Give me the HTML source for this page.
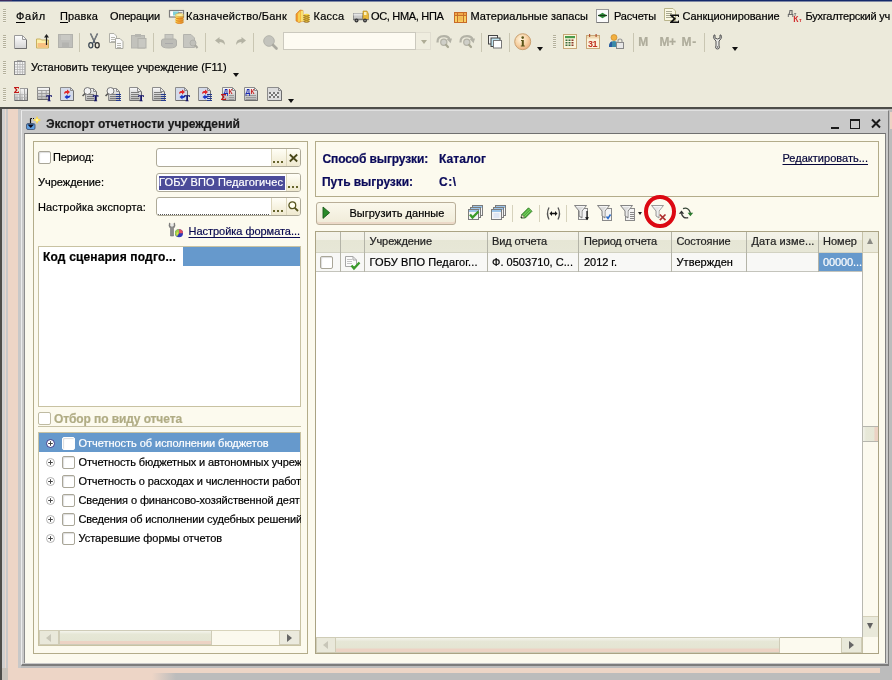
<!DOCTYPE html>
<html>
<head>
<meta charset="utf-8">
<style>
*{box-sizing:border-box;margin:0;padding:0}
html,body{width:892px;height:680px;overflow:hidden}
body{position:relative;background:#ECEADB;font-family:"Liberation Sans",sans-serif;font-size:12px;color:#000}
.a{position:absolute}
.t{position:absolute;white-space:nowrap;line-height:15px;height:15px;-webkit-text-stroke:0.2px currentColor}
.grip{position:absolute;width:3px;background:repeating-linear-gradient(to bottom,#b4b19c 0,#b4b19c 1px,#f2f0e4 1px,#f2f0e4 2px)}
u{text-decoration-thickness:1px;text-underline-offset:1.5px}
.sep{position:absolute;width:1px;background:#c9c6b2}
.inp{position:absolute;height:18.5px;border:1px solid #aeaa98;border-radius:3px;background:#fff;overflow:hidden}
.btn{position:absolute;top:0;bottom:0;width:15px;background:linear-gradient(#fffef6,#efe9cf);border-left:1px solid #dcd6bc}
.cb{position:absolute;width:13px;height:13px;border:1px solid #a9a698;border-radius:2px;background:#fff;box-shadow:inset 1px 1px 1px #ddd}
.vl{position:absolute;width:1px;background:#b4b4a8}
svg{position:absolute;overflow:visible}
</style>
</head>
<body>
<div id="root" style="position:absolute;left:0;top:0;width:892px;height:680px;will-change:transform">
<!-- top dark line -->
<div class="a" style="left:0;top:0;width:892px;height:1px;background:#14296a"></div><div class="a" style="left:0;top:1px;width:892px;height:1px;background:#7f88a4"></div><div class="a" style="left:0;top:0;width:12px;height:1px;background:#3c2a5e"></div>
<!-- toolbar grips -->
<div class="grip" style="left:3px;top:9px;height:14px"></div>
<div class="grip" style="left:3px;top:35px;height:14px"></div>
<div class="grip" style="left:3px;top:61px;height:14px"></div>
<div class="grip" style="left:3px;top:88px;height:14px"></div>
<div class="grip" style="left:553px;top:35px;height:14px"></div>
<!-- toolbar separators row1 -->
<div class="sep" style="left:79px;top:33px;height:19px"></div>
<div class="sep" style="left:153px;top:33px;height:19px"></div>
<div class="sep" style="left:205px;top:33px;height:19px"></div>
<div class="sep" style="left:253px;top:33px;height:19px"></div>
<div class="sep" style="left:481px;top:33px;height:19px"></div>
<div class="sep" style="left:509px;top:33px;height:19px"></div>
<div class="sep" style="left:633px;top:33px;height:19px"></div>
<div class="sep" style="left:704px;top:33px;height:19px"></div>
<!-- search combo -->
<div class="a" style="left:283px;top:32px;width:133px;height:18px;border:1px solid #cbc9be;background:#fdfbf2"></div>
<div class="a" style="left:416px;top:32px;width:15px;height:18px;border:1px solid #e0ddd0;border-left:0;background:#efeddf"></div>
<div class="a" style="left:420.5px;top:40px;width:0;height:0;border-left:3.7px solid transparent;border-right:3.7px solid transparent;border-top:4.2px solid #aeac96"></div>

<!-- MDI AREA -->
<div class="a" style="left:0;top:107px;width:892px;height:573px;background:#bcbcbc"></div>
<div class="a" style="left:0;top:107px;width:892px;height:2px;background:#4d4d49"></div>
<div class="a" style="left:0;top:107px;width:2px;height:573px;background:#4d4d49"></div>
<div class="a" style="left:2px;top:109px;width:3px;height:571px;background:#d0d0d0"></div>
<div class="a" style="left:5px;top:109px;width:1px;height:560px;background:#ead8cc"></div>
<div class="a" style="left:6px;top:109px;width:2px;height:560px;background:#c8c8c8"></div>
<div class="a" style="left:8px;top:109px;width:10px;height:571px;background:#edd5c6"></div>
<div class="a" style="left:18px;top:109px;width:3px;height:559px;background:#c8c8c8"></div>
<div class="a" style="left:16px;top:673px;width:160px;height:7px;background:linear-gradient(to right,#edd5c6 0,#edd5c6 85%,#bcbcbc 100%)"></div>
<div class="a" style="left:2px;top:668px;width:6px;height:12px;background:#c9c4bc"></div>
<!-- bottom peach strip -->
<div class="a" style="left:8px;top:668px;width:872px;height:5px;background:#edd5c6"></div>
<div class="a" style="left:890px;top:112px;width:2px;height:17px;background:#edd3c4"></div>

<!-- WINDOW -->
<div class="a" style="left:21px;top:110px;width:868px;height:556px;background:#c9c9c9;border-left:1px solid #ececec;border-top:1px solid #e0e0e0;border-right:1px solid #7c7c7c;border-bottom:2px solid #7c7c7c"></div>
<!-- body -->
<div class="a" style="left:24px;top:133px;width:862px;height:530px;background:#fcfaee;border-left:1px solid #8d8d8d;border-top:1px solid #707070;border-right:1px solid #808080"></div>
<!-- window controls -->
<div class="a" style="left:831px;top:127px;width:8px;height:2px;background:#1a1a1a"></div>
<div class="a" style="left:850px;top:119px;width:10px;height:10px;border:1px solid #1a1a1a;border-top-width:2px"></div>
<svg style="left:871px;top:119px" width="10" height="9" viewBox="0 0 10 9"><path d="M1 0.5 L9 8.5 M9 0.5 L1 8.5" stroke="#1a1a1a" stroke-width="2" fill="none"/></svg>

<!-- LEFT PANEL -->
<div class="a" style="left:33px;top:141px;width:275px;height:513px;border:1px solid #b3ac8a"></div>
<div class="cb" style="left:38px;top:151px"></div>
<div class="inp" style="left:156px;top:148px;width:145px"><div class="btn" style="left:114px"></div><div class="btn" style="left:129px"></div></div>
<div class="inp" style="left:156px;top:173.3px;width:145px"><div class="a" style="left:2px;top:2px;width:126px;height:14px;background:#4b4b99"></div><div class="btn" style="left:129px"></div></div>
<div class="inp" style="left:156px;top:197.3px;width:145px"><div class="a" style="left:1px;right:31px;bottom:0;height:0;border-bottom:1px dotted #555"></div><div class="btn" style="left:114px"></div><div class="btn" style="left:129px"></div></div>
<!-- upper table -->
<div class="a" style="left:38px;top:246px;width:263px;height:161px;background:#fff;border:1px solid #c8c2a2"></div>
<div class="a" style="left:183px;top:247px;width:117px;height:19px;background:#6699cc"></div>
<!-- filter checkbox -->
<div class="cb" style="left:38px;top:412px;border-color:#bfbba2;box-shadow:none"></div>
<div class="a" style="left:38px;top:426px;width:263px;height:1px;background:#c6c1a4"></div>
<!-- tree -->
<div class="a" style="left:38px;top:432px;width:263px;height:214px;background:#fff;border:1px solid #c8c2a2"></div>
<div class="a" style="left:39px;top:433px;width:261px;height:19px;background:#6699cc"></div>
<div class="cb" style="left:62px;top:437px;border-color:#fff"></div>
<div class="cb" style="left:62px;top:456px"></div>
<div class="cb" style="left:62px;top:475px"></div>
<div class="cb" style="left:62px;top:494px"></div>
<div class="cb" style="left:62px;top:513px"></div>
<div class="cb" style="left:62px;top:532px"></div>
<!-- tree hscroll -->
<div class="a" style="left:39px;top:630px;width:261px;height:15px;background:#fbf9ee;border-top:1px solid #d8d4bc"></div>
<div class="a" style="left:39px;top:630px;width:20px;height:15px;background:#e9e8da;border:1px solid #d0ccb6"></div>
<div class="a" style="left:59px;top:630px;width:153px;height:15px;background:linear-gradient(#f4f4ec 0,#e6e7d6 25%,#e4e5d3 75%,#ecd3c4 80%);border:1px solid #cfccb8"></div>
<div class="a" style="left:279px;top:630px;width:21px;height:15px;background:#ebeade;border:1px solid #d0ccb6"></div>

<!-- RIGHT PANEL -->
<div class="a" style="left:315px;top:141px;width:564px;height:56px;border:1px solid #b3ac8a"></div>
<!-- button -->
<div class="a" style="left:315.5px;top:201.5px;width:140px;height:23px;border:1px solid #b9ae98;border-radius:3px;background:linear-gradient(#faf8ec,#f0ebd8);box-shadow:inset 0 -2px 0 #ecd9c8"></div>
<!-- toolbar seps -->
<div class="sep" style="left:512px;top:205px;height:17px;background:#d6d2bc"></div>
<div class="sep" style="left:539px;top:205px;height:17px;background:#d6d2bc"></div>
<div class="sep" style="left:566px;top:205px;height:17px;background:#d6d2bc"></div>
<!-- table -->
<div class="a" style="left:315px;top:231px;width:564px;height:423px;background:#fff;border:1px solid #aaa384"></div>
<div class="a" style="left:316px;top:232px;width:546px;height:21px;background:linear-gradient(#f4f3ea 0,#f1f0e6 38%,#e6e6d5 42%,#e7e7d7 100%);border-bottom:1px solid #d2d2c2"></div>
<div class="a" style="left:316px;top:253px;width:546px;height:19px;background:#f8f8f6;border-bottom:1px solid #c4c4bc"></div>
<div class="a" style="left:819px;top:253px;width:43px;height:18px;background:#6699cc"></div>
<div class="vl" style="left:340px;top:232px;height:40px"></div>
<div class="vl" style="left:364px;top:232px;height:40px"></div>
<div class="vl" style="left:487px;top:232px;height:40px"></div>
<div class="vl" style="left:578px;top:232px;height:40px"></div>
<div class="vl" style="left:671px;top:232px;height:40px"></div>
<div class="vl" style="left:746px;top:232px;height:40px"></div>
<div class="vl" style="left:818px;top:232px;height:40px"></div>
<div class="cb" style="left:320px;top:256px"></div>
<!-- v scroll -->
<div class="a" style="left:862px;top:232px;width:16px;height:421px;background:#fcfaef;border-left:1px solid #b8b8b0"></div>
<div class="a" style="left:862px;top:232px;width:16px;height:21px;background:#ebeadb;border-left:1px solid #c6c2a8;border-bottom:1px solid #d5d1ba"></div>
<div class="a" style="left:867px;top:238px;width:0;height:0;border:3.5px solid transparent;border-bottom:6.5px solid #8a8a84;border-top:0"></div>
<div class="a" style="left:863px;top:426px;width:15px;height:16px;background:linear-gradient(to right,#f2f2ea 0,#e7e8d8 20%,#e6e7d6 72%,#ecd3c4 80%);border-top:1px solid #b6b6ae;border-bottom:1px solid #b6b6ae"></div>
<div class="a" style="left:863px;top:616px;width:15px;height:21px;background:#e9e9da;border-top:1px solid #d5d1ba"></div>
<div class="a" style="left:867px;top:623px;width:0;height:0;border:3.5px solid transparent;border-top:6.5px solid #606060;border-bottom:0"></div>
<!-- h scroll -->
<div class="a" style="left:316px;top:637px;width:546px;height:16px;background:#fcfaef;border-top:1px solid #bdb9a0"></div>
<div class="a" style="left:316px;top:637px;width:20px;height:16px;background:#e9e8da;border:1px solid #cfccb6"></div>
<div class="a" style="left:336px;top:637px;width:444px;height:16px;background:linear-gradient(#f4f4ec 0,#e6e7d6 25%,#e4e5d3 72%,#ecd3c4 78%);border:1px solid #cfccb8;border-left:0"></div>
<div class="a" style="left:841px;top:637px;width:21px;height:16px;background:#e9e9da;border:1px solid #cfccb6"></div>
<div class="a" style="left:862px;top:637px;width:1px;height:16px;background:#c6c2a8"></div>

<svg width="0" height="0" style="left:0;top:0"><defs>
<linearGradient id="gdoc" x1="0" y1="0" x2="0" y2="1"><stop offset="0" stop-color="#ffffff"/><stop offset="1" stop-color="#d4d4d4"/></linearGradient>
<linearGradient id="ggray" x1="0" y1="0" x2="0" y2="1"><stop offset="0" stop-color="#d0cfc4"/><stop offset="1" stop-color="#b9b8ae"/></linearGradient>
<linearGradient id="gfold" x1="0" y1="0" x2="0" y2="1"><stop offset="0" stop-color="#fff3b0"/><stop offset="1" stop-color="#f7c777"/></linearGradient>
<radialGradient id="ginfo" cx="0.4" cy="0.35" r="0.7"><stop offset="0" stop-color="#fff6e0"/><stop offset="0.6" stop-color="#f6cfa0"/><stop offset="1" stop-color="#e8a878"/></radialGradient>
<linearGradient id="gcoin" x1="0" y1="0" x2="1" y2="0"><stop offset="0" stop-color="#f5e25a"/><stop offset="0.6" stop-color="#f0a030"/><stop offset="1" stop-color="#c8a040"/></linearGradient>
<linearGradient id="gdoc2" x1="0" y1="0" x2="0" y2="1"><stop offset="0" stop-color="#fafafa"/><stop offset="1" stop-color="#b4b4b4"/></linearGradient>
</defs></svg>
<svg style="left:169px;top:9px" width="16" height="16" viewBox="0 0 16 16" ><rect x="0.5" y="1.5" width="14" height="6.5" fill="#fff" stroke="#7d7d7d" stroke-width="1.2"/><rect x="4" y="2.5" width="6" height="4" fill="#7fd0d8"/><rect x="9" y="3" width="4.5" height="1" fill="#999"/><path d="M6.5 6 a4 1.6 0 0 1 8 0 v7 a4 1.6 0 0 1 -8 0z" fill="url(#gcoin)"/><ellipse cx="10.5" cy="6" rx="4" ry="1.6" fill="#fbf0a0" stroke="#c8a040" stroke-width="0.5"/><path d="M6.5 8.3 a4 1.6 0 0 0 8 0 M6.5 10.6 a4 1.6 0 0 0 8 0 M6.5 12.8 a4 1.6 0 0 0 8 0" fill="none" stroke="#e07818" stroke-width="0.9"/></svg>
<svg style="left:295px;top:9px" width="16" height="15" viewBox="0 0 16 15" ><path d="M1 5 L5 1 L8 1.5 L8 12 L4 13.5 L1 12Z" fill="#f3a032" stroke="#d07818" stroke-width="0.6"/><path d="M3 4.5 L5.5 2 V12.5 L3 13Z" fill="#f8d050"/><path d="M6 2 L8 1.5 V12 L6 12.8Z" fill="#f8e070"/><path d="M8.5 6 a3 1.2 0 0 1 6 0 v6 a3 1.2 0 0 1 -6 0z" fill="#f6d648"/><path d="M8.5 6 a3 1.2 0 0 0 6 0 M8.5 8 a3 1.2 0 0 0 6 0 M8.5 10 a3 1.2 0 0 0 6 0 M8.5 12 a3 1.2 0 0 0 6 0" fill="none" stroke="#7a4a10" stroke-width="0.9"/></svg>
<svg style="left:353px;top:10px" width="16" height="13" viewBox="0 0 16 13" ><rect x="0.5" y="3.5" width="9" height="5.5" fill="#c9c9c9" stroke="#8e8e8e"/><rect x="0.5" y="3.5" width="9" height="2" fill="#e4e4e4"/><path d="M10 1 H14 L15.5 4 V9.5 H10Z" fill="#e9b83a" stroke="#b08820" stroke-width="0.6"/><rect x="11" y="2" width="2.5" height="3" fill="#f8f0c0"/><rect x="0" y="9" width="15.5" height="1.2" fill="#777"/><circle cx="3.5" cy="10.5" r="2" fill="#333"/><circle cx="12" cy="10.5" r="2" fill="#333"/><circle cx="3.5" cy="10.5" r="0.8" fill="#999"/><circle cx="12" cy="10.5" r="0.8" fill="#999"/></svg>
<svg style="left:454px;top:12px" width="13" height="11" viewBox="0 0 13 11" ><rect x="0.5" y="0.5" width="12" height="10" fill="#f8cf60" stroke="#c86a28"/><rect x="1" y="1" width="11" height="2" fill="#f0a848"/><path d="M3.5 0.5 V10.5 M9.5 0.5 V10.5 M0.5 3.5 H12.5" stroke="#c8702a" stroke-width="1" fill="none"/><rect x="4.5" y="4.5" width="4" height="4" fill="#f2b850"/></svg>
<svg style="left:596px;top:9px" width="13" height="14" viewBox="0 0 13 14" ><rect x="0.5" y="0.5" width="12" height="13" fill="#fbfbfb" stroke="#9a9a9a"/><path d="M1 13.5 H12.5 V1" stroke="#777" fill="none"/><path d="M2 6.5 L6.5 3.8 L11 6.5 L6.5 9.2Z" fill="#2e8b3a"/><path d="M2 6.5 H11" stroke="#1a3a1a" stroke-width="1.2"/></svg>
<svg style="left:664px;top:8px" width="16" height="15" viewBox="0 0 16 15" ><path d="M0.5 0.5 H9 L11.5 3 V12.5 H0.5Z" fill="#fbf8e4" stroke="#b9b48a"/><rect x="2" y="3" width="6" height="1" fill="#a8a890"/><rect x="2" y="5" width="6" height="1" fill="#a8a890"/><rect x="2" y="7" width="6" height="1" fill="#a8a890"/><rect x="2" y="9" width="6" height="1" fill="#a8a890"/><path d="M6 6.5 H15 V9 H14 V8 H9 L12 10.8 L9 13.5 H14 V12.5 H15 V15 H6 V14 L9.5 10.8 L6 7.5Z" fill="#111"/></svg>
<svg style="left:787px;top:8px" width="16" height="15" viewBox="0 0 16 15" ><text x="0.8" y="6.6" font-family="Liberation Sans" font-weight="bold" font-size="8" fill="#6a6a6a">Д</text><text x="6.8" y="7.6" font-family="Liberation Sans" font-weight="bold" font-size="5.5" fill="#6a6a6a">т</text><text x="6.2" y="13.6" font-family="Liberation Sans" font-weight="bold" font-size="8.5" fill="#d23030">К</text><text x="12" y="14.4" font-family="Liberation Sans" font-weight="bold" font-size="5.5" fill="#d23030">т</text></svg>
<svg style="left:14px;top:35px" width="13" height="14" viewBox="0 0 13 14" ><path d="M0.5 0.5 H8.5 L12.5 4.5 V13.5 H0.5 Z" fill="url(#gdoc)" stroke="#9a9a9a"/><path d="M8.5 0.5 V4.5 H12.5" fill="none" stroke="#9a9a9a"/><path d="M1 13.5 H12.5 V5" fill="none" stroke="#6e6e6e"/></svg>
<svg style="left:36px;top:33px" width="15" height="16" viewBox="0 0 15 16" ><path d="M0.5 6 H4.5 L5.5 7 H12.5 V15 H0.5Z" fill="#fdf0a8" stroke="#c8b060"/><rect x="1.5" y="10" width="10.5" height="4.5" fill="#f8c080"/><path d="M10.5 12 V2.5" stroke="#222" stroke-width="1.2"/><path d="M8 4.5 L10.5 1 L13 4.5Z" fill="#222"/></svg>
<svg style="left:58px;top:34px" width="15" height="14" viewBox="0 0 15 14" ><rect x="0.5" y="0.5" width="14" height="13" fill="#bfbfbb" stroke="#b2b2ac"/><rect x="3" y="1" width="9" height="5" fill="#c9c9c4"/><rect x="4" y="8.5" width="7" height="5" fill="#b4b4b0"/></svg>
<svg style="left:88px;top:33px" width="12" height="16" viewBox="0 0 12 16" ><path d="M2.5 0.5 L7 10 M9.5 0.5 L5 10" stroke="#56606c" stroke-width="1.5" fill="none"/><path d="M2.5 0.5 L5.5 7 M9.5 0.5 L6.5 7" stroke="#888" stroke-width="0.8" fill="none"/><ellipse cx="2.8" cy="12.3" rx="2" ry="2.6" fill="none" stroke="#3a4652" stroke-width="1.3"/><ellipse cx="9.2" cy="12.3" rx="2" ry="2.6" fill="none" stroke="#333" stroke-width="1.3"/></svg>
<svg style="left:109px;top:33px" width="15" height="16" viewBox="0 0 15 16" ><path d="M0.5 0.5 H5 L7.5 3 V9.5 H0.5Z" fill="#fafafa" stroke="#b0b0a8"/><rect x="2" y="4" width="4" height="1" fill="#b8b8b0"/><rect x="2" y="6" width="4" height="1" fill="#b8b8b0"/><rect x="2" y="8" width="4" height="1" fill="#b8b8b0"/><path d="M6.5 5.5 H11 L14 8.5 V15.5 H6.5Z" fill="#fafafa" stroke="#a8a8a0"/><rect x="8" y="10" width="4" height="1" fill="#b8b8b0"/><rect x="8" y="12" width="4" height="1" fill="#b8b8b0"/><rect x="8" y="14" width="4" height="1" fill="#b8b8b0"/></svg>
<svg style="left:131px;top:34px" width="16" height="15" viewBox="0 0 16 15" ><rect x="0.5" y="1.5" width="13" height="12.5" fill="#c2c2bc" stroke="#b4b4ae"/><rect x="4" y="0" width="6" height="3" fill="#b6b6b0"/><rect x="7" y="4.5" width="8" height="9.5" fill="#c8c8c2" stroke="#b0b0aa"/></svg>
<svg style="left:161px;top:34px" width="16" height="15" viewBox="0 0 16 15" ><rect x="4" y="0.5" width="8" height="5" fill="#c8c8c2" stroke="#b6b6b0"/><path d="M0.5 7 Q0.5 5 2.5 5 H13.5 Q15.5 5 15.5 7 V11 Q15.5 14 8 14 Q0.5 14 0.5 11Z" fill="#bdbdb7" stroke="#b0b0aa"/><rect x="4" y="9" width="8" height="1" fill="#aaa"/></svg>
<svg style="left:183px;top:33px" width="16" height="16" viewBox="0 0 16 16" ><path d="M0.5 1.5 H8 L11.5 5 V14.5 H0.5Z" fill="#c6c6c0" stroke="#b4b4ae"/><circle cx="10" cy="10" r="3" fill="#c0c0ba" stroke="#b0b0aa"/><path d="M12 12 L14.5 15" stroke="#aaa9a0" stroke-width="2"/></svg>
<svg style="left:215px;top:37px" width="11" height="9" viewBox="0 0 11 9" ><path d="M0 3.5 L4.5 0 V2 Q10 2 10 8 Q8 5 4.5 5 V7Z" fill="#b4b3a4"/></svg>
<svg style="left:235px;top:37px" width="11" height="9" viewBox="0 0 11 9" ><path d="M11 3.5 L6.5 0 V2 Q1 2 1 8 Q3 5 6.5 5 V7Z" fill="#b4b3a4"/></svg>
<svg style="left:263px;top:35px" width="16" height="15" viewBox="0 0 16 15" ><circle cx="6" cy="6" r="5.3" fill="#c3c3bc" stroke="#b2b2aa"/><path d="M10 10 L13.5 13.5" stroke="#aaa9a0" stroke-width="2.6" stroke-linecap="round"/></svg>
<svg style="left:435.5px;top:34px" width="16" height="14" viewBox="0 0 16 14" ><path d="M1.5 8.5 Q1 2.2 8 2.2 Q12.5 2.2 13.6 5.5" stroke="#b3b2a6" stroke-width="2.3" fill="none"/><path d="M10.6 5 L16 4.4 L14.6 9.2Z" fill="#b3b2a6"/><circle cx="7.8" cy="8.3" r="3.1" fill="#cfcfc8" stroke="#b3b2a6" stroke-width="1.2"/><path d="M10 10.8 L12 13" stroke="#a9a894" stroke-width="2.2" stroke-linecap="round"/></svg>
<svg style="left:458.5px;top:34px" width="16" height="14" viewBox="0 0 16 14" ><path d="M1.5 8.5 Q1 2.2 8 2.2 Q12.5 2.2 13.6 5.5" stroke="#b3b2a6" stroke-width="2.3" fill="none"/><path d="M10.6 5 L16 4.4 L14.6 9.2Z" fill="#b3b2a6"/><circle cx="7.8" cy="8.3" r="3.1" fill="#cfcfc8" stroke="#b3b2a6" stroke-width="1.2"/><path d="M10 10.8 L12 13" stroke="#a9a894" stroke-width="2.2" stroke-linecap="round"/></svg>
<svg style="left:488px;top:35px" width="15" height="14" viewBox="0 0 15 14" ><rect x="0.5" y="0.5" width="9" height="8.5" fill="#f4f4f4" stroke="#444"/><rect x="3" y="3" width="9" height="8.5" fill="#bfe4f0" stroke="#444"/><rect x="5.5" y="5.5" width="8" height="7.5" fill="#fff" stroke="#777"/></svg>
<svg style="left:514px;top:33px" width="18" height="18" viewBox="0 0 18 18" ><circle cx="8.7" cy="8.7" r="8" fill="url(#ginfo)" stroke="#c8a070" stroke-width="1"/><circle cx="8.7" cy="4.6" r="1.3" fill="#5a5418"/><path d="M7 7 H9.8 V12.5 H10.8 V13.5 H6.8 V12.5 H7.8 V8 H7Z" fill="#5a5418"/></svg>
<div class="a" style="left:537px;top:47px;width:0;height:0;border-left:3.5px solid transparent;border-right:3.5px solid transparent;border-top:4px solid #111"></div>
<svg style="left:563px;top:34px" width="14" height="15" viewBox="0 0 14 15" ><rect x="0.5" y="0.5" width="13" height="14" fill="#fbf6dc" stroke="#c8a878"/><rect x="2" y="2" width="10" height="2.2" fill="#4a9a4a"/><rect x="2.5" y="5.5" width="2" height="1.5" fill="#3a6a3a"/><rect x="2.5" y="8.0" width="2" height="1.5" fill="#3a6a3a"/><rect x="2.5" y="10.5" width="2" height="1.5" fill="#3a6a3a"/><rect x="5.5" y="5.5" width="2" height="1.5" fill="#3a6a3a"/><rect x="5.5" y="8.0" width="2" height="1.5" fill="#3a6a3a"/><rect x="5.5" y="10.5" width="2" height="1.5" fill="#3a6a3a"/><rect x="8.5" y="5.5" width="2" height="1.5" fill="#8a3a2a"/><rect x="8.5" y="8.0" width="2" height="1.5" fill="#8a3a2a"/><rect x="8.5" y="10.5" width="2" height="1.5" fill="#8a3a2a"/></svg>
<svg style="left:586px;top:34px" width="14" height="15" viewBox="0 0 14 15" ><rect x="0.5" y="1.5" width="13" height="13" fill="#fbf3dc" stroke="#c8a878"/><rect x="1" y="2" width="12" height="2.5" fill="#f0d8b0"/><rect x="3" y="0" width="1.2" height="3" fill="#b05030"/><rect x="9.5" y="0" width="1.2" height="3" fill="#b05030"/><text x="2" y="13" font-family="Liberation Sans" font-weight="bold" font-size="9" fill="#c03020" letter-spacing="-0.5">31</text></svg>
<svg style="left:609px;top:34px" width="15" height="15" viewBox="0 0 15 15" ><circle cx="5" cy="3.5" r="3" fill="#f2b040" stroke="#c08020" stroke-width="0.6"/><path d="M0 13 Q0 7 5 7 Q10 7 10 13Z" fill="#3a8aa8"/><path d="M0 13 Q0 8 3 7.5 L3 13Z" fill="#2a5aa0"/><rect x="7.5" y="8.5" width="7" height="6" fill="#e8e8e8" stroke="#888"/><path d="M9 8.5 V7 Q9 5 11 5 Q13 5 13 7 V8.5" fill="none" stroke="#999" stroke-width="1.2"/></svg>
<svg style="left:712px;top:34px" width="12" height="16" viewBox="0 0 12 16" ><path d="M2 1 Q0.5 4 3 6 L4 7 V12 Q3 13 4 14.5 Q5.5 15.5 7 14.5 Q8 13 7 12 V7 L8 6 Q10.5 4 9 1 L8 1 V4 L5.5 5 L3 4 V1Z" fill="#e8e8e4" stroke="#555" stroke-width="1"/><circle cx="5.5" cy="13" r="0.8" fill="#555"/></svg>
<div class="a" style="left:732px;top:47px;width:0;height:0;border-left:3.5px solid transparent;border-right:3.5px solid transparent;border-top:4px solid #111"></div>
<svg style="left:14px;top:60px" width="12" height="15" viewBox="0 0 12 15" ><rect x="3" y="0" width="5" height="2" fill="#aaa"/><rect x="0.5" y="1.5" width="10.5" height="13" fill="#f2f2f2" stroke="#8a8a8a"/><path d="M3.5 2 V14 M6 2 V14 M8.5 2 V14 M1 4.5 H11 M1 7 H11 M1 9.5 H11 M1 12 H11" stroke="#b4b4b4" stroke-width="0.8" fill="none"/></svg>
<div class="a" style="left:233px;top:73px;width:0;height:0;border-left:3.5px solid transparent;border-right:3.5px solid transparent;border-top:4px solid #111"></div>
<svg style="left:14px;top:87px" width="15" height="14" viewBox="0 0 15 14" ><rect x="0.5" y="1.5" width="13" height="12" fill="url(#gdoc2)" stroke="#9a9a9a"/><path d="M5 2 V13 M9.5 2 V13" stroke="#f8f8f8" stroke-width="1"/><path d="M5.9 2 V13 M10.4 2 V13" stroke="#8a8a8a" stroke-width="0.8"/><path d="M1 7.5 H13 M1 10.5 H13" stroke="#b0b0b0" stroke-width="0.7"/><path d="M1 13.5 H13.5 V2" fill="none" stroke="#6a6a6a"/><rect x="0" y="0" width="6" height="6.6" fill="#ecead9"/><path d="M0 0 H5 V1.7 H4.3 V1 H1.9 L3.6 3 L1.9 5 H4.3 V4.3 H5 V6 H0 V5.2 L2 3 L0 0.8Z" fill="#c01818"/></svg>
<svg style="left:37px;top:87px" width="16" height="15" viewBox="0 0 16 15" ><rect x="0.5" y="0.5" width="12" height="12" fill="url(#gdoc2)" stroke="#8c8c8c"/><path d="M0.5 3.5 H12.5 M0.5 6.5 H12.5 M0.5 9.5 H12.5 M4.8 3.5 V12.5 M9.2 3.5 V12.5" stroke="#9a9a9a" stroke-width="0.9" fill="none"/><path d="M1 12.5 H12.5 V1" fill="none" stroke="#666"/><rect x="8" y="6" width="8" height="9" fill="#ecead8" opacity="0.0"/><path d="M9.3 8.2 h5.6 v1.8 h-0.8 v-0.8 h-1.2 v4.2 h0.8 v0.9 h-3.2 v-0.9 h0.8 v-4.2 h-1.2 v0.8 h-0.8 z" fill="#10106a"/></svg>
<svg style="left:60px;top:87px" width="14" height="14" viewBox="0 0 14 14" ><path d="M0.5 0.5 H10.5 L13.5 3.5 V13.5 H0.5 Z" fill="#d4dbea" stroke="#8c8c8c"/><path d="M10.5 0.5 V3.5 H13.5" fill="none" stroke="#8c8c8c"/><path d="M1 13.5 H13.5 V4" fill="none" stroke="#6e6e6e"/><path d="M4 7 C4 4.5 5.5 4 7 4 V2.5 L10 5 L7 7.5 V6 C5.8 6 5 6.2 4 7Z" fill="#e02828"/><path d="M10.5 8 C10.5 10.5 9 11 7.5 11 V12.5 L4.5 10 L7.5 7.5 V9 C8.7 9 9.5 8.8 10.5 8Z" fill="#1a38c8"/></svg>
<svg style="left:82px;top:87px" width="17" height="15" viewBox="0 0 17 15" ><g transform="translate(3,1)"><path d="M0.5 0.5 H8.5 L11.5 3.5 V12.5 H0.5 Z" fill="url(#gdoc2)" stroke="#8c8c8c"/><path d="M8.5 0.5 V3.5 H11.5" fill="none" stroke="#8c8c8c"/><path d="M1 12.5 H11.5 V4" fill="none" stroke="#6e6e6e"/><rect x="2" y="6" width="7" height="1" fill="#7c7c7c"/><rect x="2" y="8" width="7" height="1" fill="#7c7c7c"/><rect x="2" y="10" width="7" height="1" fill="#7c7c7c"/></g><circle cx="5.5" cy="4" r="3.5" fill="#f4f4f4" stroke="#777"/><path d="M3.0500000000000003 6.449999999999999 L0.5500000000000003 8.95" stroke="#555" stroke-width="1.6"/><path d="M10.8 8.2 h5.6 v1.8 h-0.8 v-0.8 h-1.2 v4.2 h0.8 v0.9 h-3.2 v-0.9 h0.8 v-4.2 h-1.2 v0.8 h-0.8 z" fill="#10106a"/></svg>
<svg style="left:105px;top:87px" width="17" height="15" viewBox="0 0 17 15" ><g transform="translate(3,1)"><path d="M0.5 0.5 H8.5 L11.5 3.5 V12.5 H0.5 Z" fill="url(#gdoc2)" stroke="#8c8c8c"/><path d="M8.5 0.5 V3.5 H11.5" fill="none" stroke="#8c8c8c"/><path d="M1 12.5 H11.5 V4" fill="none" stroke="#6e6e6e"/><rect x="2" y="6" width="7" height="1" fill="#7c7c7c"/><rect x="2" y="8" width="7" height="1" fill="#7c7c7c"/><rect x="2" y="10" width="7" height="1" fill="#7c7c7c"/></g><circle cx="5.5" cy="4" r="3.5" fill="#f4f4f4" stroke="#777"/><path d="M3.0500000000000003 6.449999999999999 L0.5500000000000003 8.95" stroke="#555" stroke-width="1.6"/><rect x="11" y="7" width="5" height="1" fill="#243a90"/><rect x="11" y="9" width="5" height="1" fill="#243a90"/><rect x="11" y="11" width="5" height="1" fill="#243a90"/><rect x="11" y="13" width="5" height="1" fill="#243a90"/></svg>
<svg style="left:129px;top:87px" width="16" height="15" viewBox="0 0 16 15" ><path d="M0.5 0.5 H8.5 L12.5 4.5 V13.5 H0.5 Z" fill="url(#gdoc2)" stroke="#8c8c8c"/><path d="M8.5 0.5 V4.5 H12.5" fill="none" stroke="#8c8c8c"/><path d="M1 13.5 H12.5 V5" fill="none" stroke="#6e6e6e"/><rect x="2" y="5" width="8" height="1" fill="#7c7c7c"/><rect x="2" y="7" width="8" height="1" fill="#7c7c7c"/><rect x="2" y="9" width="8" height="1" fill="#7c7c7c"/><rect x="2" y="11" width="8" height="1" fill="#7c7c7c"/><path d="M9.3 8.2 h5.6 v1.8 h-0.8 v-0.8 h-1.2 v4.2 h0.8 v0.9 h-3.2 v-0.9 h0.8 v-4.2 h-1.2 v0.8 h-0.8 z" fill="#10106a"/></svg>
<svg style="left:152px;top:87px" width="15" height="15" viewBox="0 0 15 15" ><path d="M0.5 0.5 H8.5 L12.5 4.5 V13.5 H0.5 Z" fill="url(#gdoc2)" stroke="#8c8c8c"/><path d="M8.5 0.5 V4.5 H12.5" fill="none" stroke="#8c8c8c"/><path d="M1 13.5 H12.5 V5" fill="none" stroke="#6e6e6e"/><rect x="2" y="5" width="8" height="1" fill="#7c7c7c"/><rect x="2" y="7" width="8" height="1" fill="#7c7c7c"/><rect x="2" y="9" width="8" height="1" fill="#7c7c7c"/><rect x="2" y="11" width="8" height="1" fill="#7c7c7c"/><rect x="9" y="7" width="5" height="1" fill="#243a90"/><rect x="9" y="9" width="5" height="1" fill="#243a90"/><rect x="9" y="11" width="5" height="1" fill="#243a90"/><rect x="9" y="13" width="5" height="1" fill="#243a90"/></svg>
<svg style="left:175px;top:87px" width="16" height="15" viewBox="0 0 16 15" ><path d="M0.5 0.5 H9.5 L12.5 3.5 V13.5 H0.5 Z" fill="#d4dbea" stroke="#8c8c8c"/><path d="M9.5 0.5 V3.5 H12.5" fill="none" stroke="#8c8c8c"/><path d="M1 13.5 H12.5 V4" fill="none" stroke="#6e6e6e"/><path d="M4 7 C4 4.5 5.5 4 7 4 V2.5 L10 5 L7 7.5 V6 C5.8 6 5 6.2 4 7Z" fill="#e02828"/><path d="M10.5 8 C10.5 10.5 9 11 7.5 11 V12.5 L4.5 10 L7.5 7.5 V9 C8.7 9 9.5 8.8 10.5 8Z" fill="#1a38c8"/><path d="M9.3 8.2 h5.6 v1.8 h-0.8 v-0.8 h-1.2 v4.2 h0.8 v0.9 h-3.2 v-0.9 h0.8 v-4.2 h-1.2 v0.8 h-0.8 z" fill="#10106a"/></svg>
<svg style="left:198px;top:87px" width="15" height="15" viewBox="0 0 15 15" ><path d="M0.5 0.5 H9.5 L12.5 3.5 V13.5 H0.5 Z" fill="#d4dbea" stroke="#8c8c8c"/><path d="M9.5 0.5 V3.5 H12.5" fill="none" stroke="#8c8c8c"/><path d="M1 13.5 H12.5 V4" fill="none" stroke="#6e6e6e"/><path d="M4 7 C4 4.5 5.5 4 7 4 V2.5 L10 5 L7 7.5 V6 C5.8 6 5 6.2 4 7Z" fill="#e02828"/><path d="M10.5 8 C10.5 10.5 9 11 7.5 11 V12.5 L4.5 10 L7.5 7.5 V9 C8.7 9 9.5 8.8 10.5 8Z" fill="#1a38c8"/><rect x="9" y="7" width="5" height="1" fill="#243a90"/><rect x="9" y="9" width="5" height="1" fill="#243a90"/><rect x="9" y="11" width="5" height="1" fill="#243a90"/><rect x="9" y="13" width="5" height="1" fill="#243a90"/></svg>
<svg style="left:221px;top:87px" width="15" height="15" viewBox="0 0 15 15" ><g transform="translate(1,0)"><path d="M0.5 0.5 H10.5 L13.5 3.5 V13.5 H0.5 Z" fill="url(#gdoc2)" stroke="#8c8c8c"/><path d="M10.5 0.5 V3.5 H13.5" fill="none" stroke="#8c8c8c"/><path d="M1 13.5 H13.5 V4" fill="none" stroke="#6e6e6e"/><rect x="7" y="8" width="5" height="1" fill="#9a9a9a"/><rect x="7" y="10" width="5" height="1" fill="#9a9a9a"/><rect x="7" y="12" width="5" height="1" fill="#9a9a9a"/><text x="1.5" y="6.5" font-family="Liberation Sans" font-weight="bold" font-size="6.5" fill="#1a2ab0">Д</text><text x="6.5" y="6.5" font-family="Liberation Sans" font-weight="bold" font-size="6.5" fill="#c82020">К</text></g><g transform="translate(0,7)"><path d="M0 0 H5 V1.7 H4.3 V1 H1.9 L3.6 3 L1.9 5 H4.3 V4.3 H5 V6 H0 V5.2 L2 3 L0 0.8Z" fill="#c01818"/></g></svg>
<svg style="left:244px;top:87px" width="15" height="15" viewBox="0 0 15 15" ><path d="M0.5 0.5 H10.5 L13.5 3.5 V13.5 H0.5 Z" fill="url(#gdoc2)" stroke="#8c8c8c"/><path d="M10.5 0.5 V3.5 H13.5" fill="none" stroke="#8c8c8c"/><path d="M1 13.5 H13.5 V4" fill="none" stroke="#6e6e6e"/><rect x="2" y="8" width="10" height="1" fill="#9a9a9a"/><rect x="2" y="10" width="10" height="1" fill="#9a9a9a"/><rect x="2" y="12" width="10" height="1" fill="#9a9a9a"/><text x="1.5" y="6.5" font-family="Liberation Sans" font-weight="bold" font-size="6.5" fill="#1a2ab0">Д</text><text x="6.5" y="6.5" font-family="Liberation Sans" font-weight="bold" font-size="6.5" fill="#c82020">К</text></svg>
<svg style="left:267px;top:87px" width="15" height="15" viewBox="0 0 15 15" ><path d="M0.5 0.5 H11.5 L14.5 3.5 V13.5 H0.5 Z" fill="#dcdcdc" stroke="#8c8c8c"/><path d="M11.5 0.5 V3.5 H14.5" fill="none" stroke="#8c8c8c"/><path d="M1 13.5 H14.5 V4" fill="none" stroke="#6e6e6e"/><rect x="2" y="5" width="2" height="2" fill="#777"/><rect x="2" y="7" width="2" height="2" fill="#e8e8e8"/><rect x="2" y="9" width="2" height="2" fill="#777"/><rect x="4" y="5" width="2" height="2" fill="#e8e8e8"/><rect x="4" y="7" width="2" height="2" fill="#777"/><rect x="4" y="9" width="2" height="2" fill="#e8e8e8"/><rect x="6" y="5" width="2" height="2" fill="#777"/><rect x="6" y="7" width="2" height="2" fill="#e8e8e8"/><rect x="6" y="9" width="2" height="2" fill="#777"/><rect x="8" y="5" width="2" height="2" fill="#e8e8e8"/><rect x="8" y="7" width="2" height="2" fill="#777"/><rect x="8" y="9" width="2" height="2" fill="#e8e8e8"/><rect x="10" y="5" width="2" height="2" fill="#777"/><rect x="10" y="7" width="2" height="2" fill="#e8e8e8"/><rect x="10" y="9" width="2" height="2" fill="#777"/></svg>
<div class="a" style="left:288px;top:99px;width:0;height:0;border-left:3.5px solid transparent;border-right:3.5px solid transparent;border-top:4px solid #111"></div>
<svg style="left:26px;top:116px" width="15" height="15" viewBox="0 0 15 15" ><path d="M4.5 2.5 H8" stroke="#111" stroke-width="1" fill="none" stroke-dasharray="1.5 1"/><path d="M4.5 2.5 V8" stroke="#111" stroke-width="1.2"/><rect x="0.5" y="7.5" width="8.5" height="6" rx="1.5" fill="#5f9fe0" stroke="#3a4a6a" stroke-width="0.8"/><path d="M1.5 8.5 H8 L4.8 12Z" fill="#0a0a1a"/><path d="M11 0 L12.3 2.7 L15 4 L12.3 5.3 L11 8 L9.7 5.3 L7 4 L9.7 2.7Z" fill="#ffd83a"/><circle cx="11" cy="4" r="1.6" fill="#fff6a0"/></svg>
<div class="a" style="left:273px;top:161px;width:1.6px;height:1.6px;background:#66642c"></div><div class="a" style="left:277px;top:161px;width:1.6px;height:1.6px;background:#66642c"></div><div class="a" style="left:281px;top:161px;width:1.6px;height:1.6px;background:#66642c"></div>
<div class="a" style="left:288px;top:186px;width:1.6px;height:1.6px;background:#66642c"></div><div class="a" style="left:292px;top:186px;width:1.6px;height:1.6px;background:#66642c"></div><div class="a" style="left:296px;top:186px;width:1.6px;height:1.6px;background:#66642c"></div>
<div class="a" style="left:273px;top:210px;width:1.6px;height:1.6px;background:#66642c"></div><div class="a" style="left:277px;top:210px;width:1.6px;height:1.6px;background:#66642c"></div><div class="a" style="left:281px;top:210px;width:1.6px;height:1.6px;background:#66642c"></div>
<svg style="left:289px;top:154px" width="9" height="8" viewBox="0 0 9 8" ><path d="M0.8 0.5 L8.2 7.5 M8.2 0.5 L0.8 7.5" stroke="#4a481a" stroke-width="1.8" fill="none"/></svg>
<svg style="left:288px;top:201px" width="11" height="11" viewBox="0 0 11 11" ><circle cx="4.3" cy="4.3" r="3.4" fill="#fffef0" stroke="#55531e" stroke-width="1.3"/><path d="M6.8 6.8 L10 10" stroke="#55531e" stroke-width="1.8"/></svg>
<svg style="left:168px;top:222px" width="16" height="16" viewBox="0 0 16 16" ><path d="M1.5 1 Q0 4 2.5 6.5 V14 H5.5 V6.5 Q8 4 6.5 1 L6 1 V4.5 H2 V1Z" fill="#8c8c8c" stroke="#707070" stroke-width="0.6"/><path d="M3 1.5 V4.5 H5 V1.5" fill="#e8e8e8"/><circle cx="11" cy="11.2" r="4" fill="#3038b8"/><path d="M11 11.2 L11 7.2 A4 4 0 0 0 7 11.2 A4 4 0 0 0 9 14.7Z" fill="#9ad048"/><path d="M11 11.2 L11 7.2 A4 4 0 0 1 15 11.2Z" fill="#e05060"/><path d="M9 9.5 L10.5 12 L8.5 13Z" fill="#f0e050"/></svg>
<svg style="left:322.8px;top:207px" width="7" height="12" viewBox="0 0 7 12" ><path d="M0 0 L6.6 5.7 L0 11.4Z" fill="#2a8a2a"/><path d="M0 0 L6.6 5.7 L0 11.4Z" fill="none" stroke="#1a5a1a" stroke-width="0.9"/></svg>
<svg style="left:468px;top:205px" width="15" height="15" viewBox="0 0 15 15" ><rect x="4.5" y="0.5" width="10" height="10" fill="#f6f6f6" stroke="#7c7c7c"/><rect x="5" y="1" width="9" height="2" fill="#9cc4e8"/><rect x="2.5" y="2.5" width="10" height="10" fill="#f6f6f6" stroke="#7c7c7c"/><rect x="3" y="3" width="9" height="2" fill="#9cc4e8"/><rect x="0.5" y="4.5" width="10" height="10" fill="#f6f6f6" stroke="#7c7c7c"/><rect x="1" y="5" width="9" height="2" fill="#9cc4e8"/><path d="M2 9.5 L4.5 12.5 L10.5 6.5" stroke="#3a9a2a" stroke-width="2.4" fill="none"/></svg>
<svg style="left:491px;top:205px" width="15" height="15" viewBox="0 0 15 15" ><rect x="4.5" y="0.5" width="10" height="10" fill="#f6f6f6" stroke="#7c7c7c"/><rect x="5" y="1" width="9" height="2" fill="#9cc4e8"/><rect x="2.5" y="2.5" width="10" height="10" fill="#f6f6f6" stroke="#7c7c7c"/><rect x="3" y="3" width="9" height="2" fill="#9cc4e8"/><rect x="0.5" y="4.5" width="10" height="10" fill="#f6f6f6" stroke="#7c7c7c"/><rect x="1" y="5" width="9" height="2" fill="#9cc4e8"/><rect x="2.5" y="8" width="6" height="5" fill="#dfe6f4"/></svg>
<svg style="left:520px;top:207px" width="13" height="12" viewBox="0 0 13 12" ><path d="M1 11 L1.8 7.5 L8.5 0.8 L12 4.3 L5.3 11 Z" fill="#4fae3a" stroke="#2c7a22" stroke-width="0.8"/><path d="M3 8.5 L9.5 2 M4.3 9.8 L10.8 3.3" stroke="#8fd878" stroke-width="0.8"/><path d="M1 11 L1.8 7.5 L4.8 10.5Z" fill="#f4e8c8" stroke="#444" stroke-width="0.5"/><path d="M1 11 L1.4 9.6 L2.5 10.7Z" fill="#111"/></svg>
<svg style="left:546px;top:207px" width="15" height="13" viewBox="0 0 15 13" ><path d="M3 0.5 Q0 6.5 3 12.5 M12 0.5 Q15 6.5 12 12.5" stroke="#555" stroke-width="1.3" fill="none"/><path d="M3.5 6.5 L6 4 V5.8 H9 V4 L11.5 6.5 L9 9 V7.2 H6 V9Z" fill="#111"/></svg>
<svg style="left:574px;top:205px" width="15" height="16" viewBox="0 0 15 16" ><g transform="translate(4,3)"><rect x="0.5" y="0.5" width="9" height="11" fill="#f4f4f4" stroke="#8a8a8a"/></g><path d="M0.5 0.5 H12.5 L8 6 V13 L5 11 V6Z" fill="#dcdcdc" stroke="#787878" stroke-width="0.9"/><path d="M2.5 1.6 H10.5 L7 5.6 V11" fill="none" stroke="#fff" stroke-width="0.9" opacity="0.85"/><path d="M13 6 V14" stroke="#111" stroke-width="1.2"/><path d="M11 12.2 H15 L13 15.2Z" fill="#111"/></svg>
<svg style="left:597px;top:205px" width="15" height="16" viewBox="0 0 15 16" ><g transform="translate(5,3)"><rect x="0.5" y="0.5" width="9" height="12" fill="#f4f4f4" stroke="#8a8a8a"/></g><path d="M0.5 0.5 H12.5 L8 6 V13 L5 11 V6Z" fill="#dcdcdc" stroke="#787878" stroke-width="0.9"/><path d="M2.5 1.6 H10.5 L7 5.6 V11" fill="none" stroke="#fff" stroke-width="0.9" opacity="0.85"/><path d="M9.5 11.5 L11 13.5 L13.5 9.5" stroke="#2a6ac8" stroke-width="1.5" fill="none"/></svg>
<svg style="left:620px;top:205px" width="15" height="16" viewBox="0 0 15 16" ><g transform="translate(5,3)"><rect x="0.5" y="0.5" width="9" height="12" fill="#f4f4f4" stroke="#8a8a8a"/><rect x="5" y="4" width="4" height="1" fill="#888"/><rect x="5" y="6" width="4" height="1" fill="#888"/><rect x="5" y="8" width="4" height="1" fill="#888"/><rect x="5" y="10" width="4" height="1" fill="#888"/></g><path d="M0.5 0.5 H12.5 L8 6 V13 L5 11 V6Z" fill="#dcdcdc" stroke="#787878" stroke-width="0.9"/><path d="M2.5 1.6 H10.5 L7 5.6 V11" fill="none" stroke="#fff" stroke-width="0.9" opacity="0.85"/></svg>
<div class="a" style="left:638px;top:211.5px;width:0;height:0;border-left:2.5px solid transparent;border-right:2.5px solid transparent;border-top:3px solid #222"></div>
<svg style="left:651px;top:205px" width="16" height="16" viewBox="0 0 16 16" ><path d="M0.5 0.5 H12.5 L8 6 V13 L5 11 V6Z" fill="#e6e6e6" stroke="#909090" stroke-width="0.9"/><path d="M2.5 1.6 H10.5 L7 5.6 V11" fill="none" stroke="#fff" stroke-width="0.9" opacity="0.85"/><path d="M8.8 9.5 L14.5 15.2 M14.5 9.5 L8.8 15.2" stroke="#b03030" stroke-width="1.7" fill="none"/></svg>
<svg style="left:679px;top:206px" width="15" height="14" viewBox="0 0 15 14" ><path d="M4 2.6 Q9.5 0.8 11.4 7" stroke="#3a4a3a" stroke-width="1.3" fill="none"/><path d="M8.6 6.8 H14.2 L11.4 10.2Z" fill="#2a7a2e"/><path d="M9.2 11.6 Q4 13.2 2.5 7.5" stroke="#3a3a3a" stroke-width="1.3" fill="none"/><path d="M-0.2 7.8 H5.2 L2.5 4.4Z" fill="#333"/></svg>
<svg style="left:345px;top:256px" width="16" height="14" viewBox="0 0 16 14" ><path d="M0.5 0.5 H8 L11.5 4 V10.5 H0.5Z" fill="#fbfbfb" stroke="#a6a6a6"/><path d="M8 0.5 V4 H11.5" fill="none" stroke="#a6a6a6"/><rect x="2" y="3" width="5" height="1" fill="#c4c4c4"/><rect x="2" y="5" width="5" height="1" fill="#c4c4c4"/><rect x="2" y="7" width="5" height="1" fill="#c4c4c4"/><path d="M6.5 9.5 L9 12.5 L14.5 6.5" stroke="#3a9a2a" stroke-width="2.3" fill="none"/></svg>
<svg style="left:46px;top:439.0px" width="9" height="9" viewBox="0 0 9 9" ><circle cx="4.5" cy="4.5" r="4" fill="#fff" stroke="#3a3a8a" stroke-width="1"/><path d="M2.2 4.5 H6.8 M4.5 2.2 V6.8" stroke="#444" stroke-width="1"/></svg>
<svg style="left:46px;top:458.0px" width="9" height="9" viewBox="0 0 9 9" ><circle cx="4.5" cy="4.5" r="4" fill="#fff" stroke="#b4b4b4" stroke-width="1"/><path d="M2.2 4.5 H6.8 M4.5 2.2 V6.8" stroke="#444" stroke-width="1"/></svg>
<svg style="left:46px;top:477.0px" width="9" height="9" viewBox="0 0 9 9" ><circle cx="4.5" cy="4.5" r="4" fill="#fff" stroke="#b4b4b4" stroke-width="1"/><path d="M2.2 4.5 H6.8 M4.5 2.2 V6.8" stroke="#444" stroke-width="1"/></svg>
<svg style="left:46px;top:496.0px" width="9" height="9" viewBox="0 0 9 9" ><circle cx="4.5" cy="4.5" r="4" fill="#fff" stroke="#b4b4b4" stroke-width="1"/><path d="M2.2 4.5 H6.8 M4.5 2.2 V6.8" stroke="#444" stroke-width="1"/></svg>
<svg style="left:46px;top:515.0px" width="9" height="9" viewBox="0 0 9 9" ><circle cx="4.5" cy="4.5" r="4" fill="#fff" stroke="#b4b4b4" stroke-width="1"/><path d="M2.2 4.5 H6.8 M4.5 2.2 V6.8" stroke="#444" stroke-width="1"/></svg>
<svg style="left:46px;top:534.0px" width="9" height="9" viewBox="0 0 9 9" ><circle cx="4.5" cy="4.5" r="4" fill="#fff" stroke="#b4b4b4" stroke-width="1"/><path d="M2.2 4.5 H6.8 M4.5 2.2 V6.8" stroke="#444" stroke-width="1"/></svg>
<svg style="left:46px;top:633.5px" width="5" height="8" viewBox="0 0 5 8" ><path d="M5 0 V8 L0 4Z" fill="#c8c6b8"/></svg>
<svg style="left:287px;top:633.5px" width="5" height="8" viewBox="0 0 5 8" ><path d="M0 0 V8 L5 4Z" fill="#666"/></svg>
<svg style="left:323px;top:641px" width="5" height="8" viewBox="0 0 5 8" ><path d="M5 0 V8 L0 4Z" fill="#c8c6b8"/></svg>
<svg style="left:849px;top:641px" width="5" height="8" viewBox="0 0 5 8" ><path d="M0 0 V8 L5 4Z" fill="#666"/></svg>
<div class="t" style="left:16px;top:8.5px;font-size:11px;letter-spacing:0.74px;"><u>Ф</u>айл</div>
<div class="t" style="left:60px;top:8.5px;font-size:11px;letter-spacing:0.14px;"><u>П</u>равка</div>
<div class="t" style="left:110px;top:8.5px;font-size:11px;letter-spacing:-0.18px;">Операции</div>
<div class="t" style="left:186px;top:8.5px;font-size:11px;letter-spacing:0.23px;">Казначейство/Банк</div>
<div class="t" style="left:313.5px;top:8.5px;font-size:11px;letter-spacing:0.27px;">Касса</div>
<div class="t" style="left:371px;top:8.5px;font-size:11px;letter-spacing:-0.32px;">ОС, НМА, НПА</div>
<div class="t" style="left:470.5px;top:8.5px;font-size:11px;letter-spacing:0.05px;">Материальные запасы</div>
<div class="t" style="left:614px;top:8.5px;font-size:11px;letter-spacing:-0.13px;">Расчеты</div>
<div class="t" style="left:682.5px;top:8.5px;font-size:11px;letter-spacing:-0.08px;">Санкционирование</div>
<div class="t" style="left:805.5px;top:8.5px;font-size:11px;letter-spacing:-0.24px;">Бухгалтерский уч</div>
<div class="t" style="left:638.3px;top:34.5px;font-size:12px;letter-spacing:0.20px;font-weight:bold;color:#aeac9b;">M</div>
<div class="t" style="left:659.5px;top:34.5px;font-size:12px;letter-spacing:-0.51px;font-weight:bold;color:#aeac9b;">M+</div>
<div class="t" style="left:681.5px;top:34.5px;font-size:12px;letter-spacing:0.75px;font-weight:bold;color:#aeac9b;">M-</div>
<div class="t" style="left:31px;top:60px;font-size:11px;letter-spacing:-0.03px;">Установить текущее учреждение (F11)</div>
<div class="t" style="left:46px;top:117px;font-size:12px;letter-spacing:-0.01px;font-weight:bold;color:#1a1a1a;">Экспорт отчетности учреждений</div>
<div class="t" style="left:53px;top:150px;font-size:11px;letter-spacing:-0.09px;">Период:</div>
<div class="t" style="left:38px;top:175px;font-size:11px;letter-spacing:-0.01px;">Учреждение:</div>
<div class="t" style="left:38px;top:199.5px;font-size:11px;letter-spacing:0.14px;">Настройка экспорта:</div>
<div class="t" style="left:159px;top:175px;font-size:11px;letter-spacing:0.13px;color:#fff;">ГОБУ ВПО Педагогичес</div>
<div class="t" style="left:188.5px;top:224px;font-size:11px;letter-spacing:-0.03px;color:#0a0a50;text-decoration:underline;text-underline-offset:2px;text-decoration-thickness:1px;">Настройка формата...</div>
<div class="t" style="left:43px;top:250px;font-size:12px;letter-spacing:0.17px;font-weight:bold;color:#000;">Код сценария подго...</div>
<div class="t" style="left:54px;top:411.5px;font-size:12px;letter-spacing:-0.10px;font-weight:bold;color:#b0ac84;">Отбор по виду отчета</div>
<div class="t" style="left:78.5px;top:436px;font-size:11px;letter-spacing:-0.04px;color:#fff;">Отчетность об исполнении бюджетов</div>
<div class="t" style="left:78.5px;top:455px;font-size:11px;letter-spacing:-0.12px;width:222.0px;overflow:hidden;">Отчетность бюджетных и автономных учреждений</div>
<div class="t" style="left:78.5px;top:474px;font-size:11px;letter-spacing:-0.12px;width:222.0px;overflow:hidden;">Отчетность о расходах и численности работников</div>
<div class="t" style="left:78.5px;top:492.5px;font-size:11px;letter-spacing:-0.10px;width:221.5px;overflow:hidden;">Сведения о финансово-хозяйственной деятельности</div>
<div class="t" style="left:78.5px;top:511.5px;font-size:11px;letter-spacing:-0.16px;width:222.0px;overflow:hidden;">Сведения об исполнении судебных решений</div>
<div class="t" style="left:78.5px;top:530.5px;font-size:11px;letter-spacing:-0.02px;">Устаревшие формы отчетов</div>
<div class="t" style="left:322.5px;top:152px;font-size:12px;letter-spacing:-0.12px;font-weight:bold;color:#0a0a5a;">Способ выгрузки:</div>
<div class="t" style="left:439px;top:152px;font-size:12px;letter-spacing:0.07px;font-weight:bold;color:#0a0a5a;">Каталог</div>
<div class="t" style="left:322px;top:174.5px;font-size:12px;letter-spacing:-0.05px;font-weight:bold;color:#0a0a5a;">Путь выгрузки:</div>
<div class="t" style="left:439px;top:174.5px;font-size:12px;letter-spacing:0.50px;font-weight:bold;color:#0a0a5a;">C:\</div>
<div class="t" style="left:782.5px;top:151px;font-size:11px;letter-spacing:0.02px;color:#06063a;text-decoration:underline;text-underline-offset:2px;text-decoration-thickness:1px;">Редактировать...</div>
<div class="t" style="left:349.5px;top:205.5px;font-size:11px;letter-spacing:0.03px;">Выгрузить данные</div>
<div class="t" style="left:369.5px;top:234px;font-size:11px;letter-spacing:-0.06px;color:#222;">Учреждение</div>
<div class="t" style="left:492px;top:234px;font-size:11px;letter-spacing:-0.14px;color:#222;">Вид отчета</div>
<div class="t" style="left:584px;top:234px;font-size:11px;letter-spacing:-0.16px;color:#222;">Период отчета</div>
<div class="t" style="left:676.5px;top:234px;font-size:11px;letter-spacing:-0.10px;color:#222;">Состояние</div>
<div class="t" style="left:751.5px;top:234px;font-size:11px;letter-spacing:0.13px;color:#222;">Дата изме...</div>
<div class="t" style="left:823px;top:234px;font-size:11px;letter-spacing:0.03px;color:#222;">Номер</div>
<div class="t" style="left:369.5px;top:255px;font-size:11px;letter-spacing:0.12px;">ГОБУ ВПО Педагог...</div>
<div class="t" style="left:492px;top:255px;font-size:11px;letter-spacing:0.03px;">Ф. 0503710, С...</div>
<div class="t" style="left:584px;top:255px;font-size:11px;letter-spacing:-0.04px;">2012 г.</div>
<div class="t" style="left:676.5px;top:255px;font-size:11px;letter-spacing:0.06px;">Утвержден</div>
<div class="t" style="left:823px;top:255px;font-size:11px;letter-spacing:-0.10px;color:#fff;">00000...</div>
<!-- red circle -->
<div class="a" style="left:643.5px;top:194.5px;width:32px;height:33.5px;border:4px solid #dc0812;border-radius:50%"></div>
</div>
</body>
</html>
